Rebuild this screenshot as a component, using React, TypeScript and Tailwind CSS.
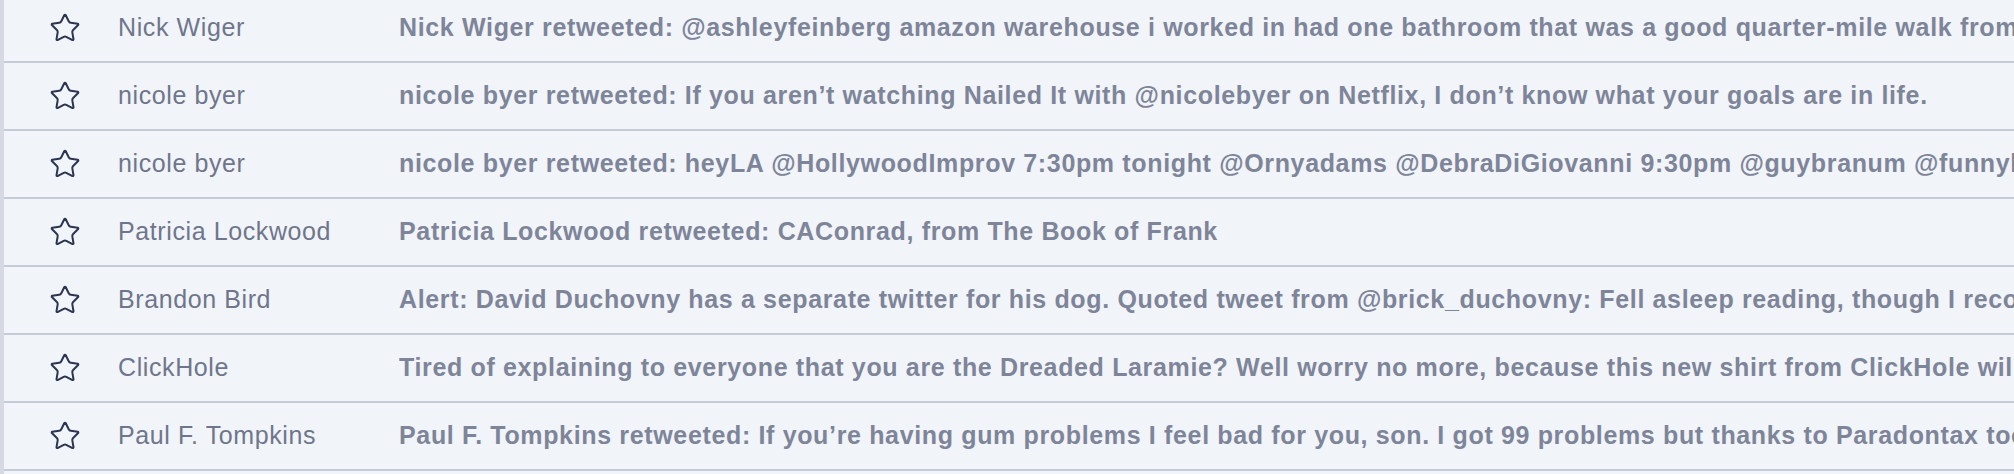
import { Star } from "lucide-react";

const rows = [
  {
    name: "Nick Wiger",
    text: "Nick Wiger retweeted: @ashleyfeinberg amazon warehouse i worked in had one bathroom that was a good quarter-mile walk from my station",
  },
  {
    name: "nicole byer",
    text: "nicole byer retweeted: If you aren’t watching Nailed It with @nicolebyer on Netflix, I don’t know what your goals are in life.",
  },
  {
    name: "nicole byer",
    text: "nicole byer retweeted: heyLA @HollywoodImprov 7:30pm tonight @Ornyadams @DebraDiGiovanni 9:30pm @guybranum @funnyking",
  },
  {
    name: "Patricia Lockwood",
    text: "Patricia Lockwood retweeted: CAConrad, from The Book of Frank",
  },
  {
    name: "Brandon Bird",
    text: "Alert: David Duchovny has a separate twitter for his dog. Quoted tweet from @brick_duchovny: Fell asleep reading, though I recommend it",
  },
  {
    name: "ClickHole",
    text: "Tired of explaining to everyone that you are the Dreaded Laramie? Well worry no more, because this new shirt from ClickHole will do it for you.",
  },
  {
    name: "Paul F. Tompkins",
    text: "Paul F. Tompkins retweeted: If you’re having gum problems I feel bad for you, son. I got 99 problems but thanks to Paradontax tooth",
  },
];

export default function App() {
  return (
    <div
      className="flex h-[474px] w-[2014px] overflow-hidden bg-[#f1f4f9]"
      style={{ fontFamily: "'Liberation Sans', Arial, sans-serif" }}
    >
      {/* left rail */}
      <div className="w-[4px] shrink-0 bg-[#d6d9e2]" />

      <div className="-mt-[5px] flex min-w-0 flex-1 flex-col">
        {rows.map((row, i) => (
          <div
            key={i}
            className="flex h-[68px] shrink-0 items-center border-b-2 border-[#c6cbd8]"
          >
            <div className="flex w-[114px] shrink-0 items-center pl-[45px]">
              <Star size={32} strokeWidth={1.5} color="#2b3550" />
            </div>
            <div className="w-[281px] shrink-0 truncate text-[25px] tracking-[0.6px] text-[#6f768b]">
              {row.name}
            </div>
            <div className="min-w-0 flex-1 overflow-hidden whitespace-nowrap text-[25px] font-bold tracking-[0.65px] text-[#7e8599]">
              {row.text}
            </div>
          </div>
        ))}
      </div>
    </div>
  );
}
